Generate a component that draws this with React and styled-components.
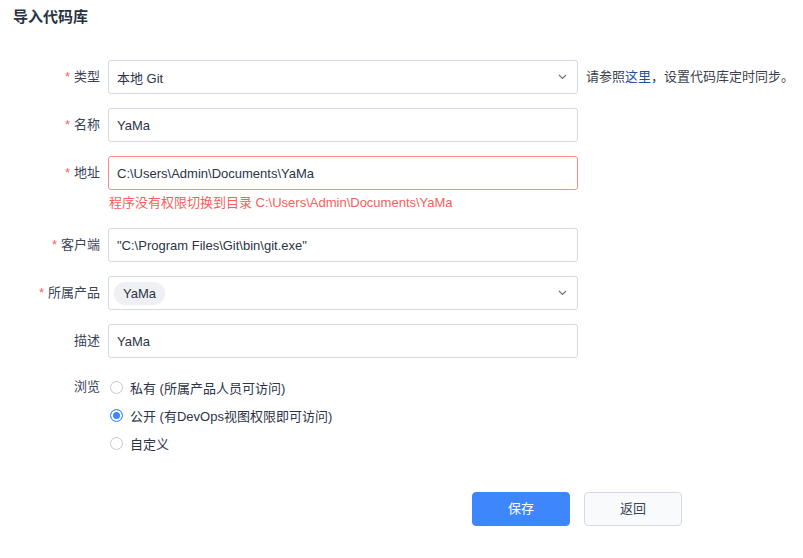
import React from "react";
import styled, { createGlobalStyle } from "styled-components";

const Global = createGlobalStyle`
  html, body { margin: 0; padding: 0; background: #fff; }
  body {
    font-family: "Liberation Sans", Arial, "Noto Sans CJK SC", sans-serif;
    font-size: 13px;
    color: #313c52;
  }
  * { box-sizing: border-box; }
`;

const Page = styled.div`
  width: 803px;
  height: 558px;
  padding: 0;
`;

const Title = styled.h2`
  margin: 0;
  height: 35px;
  padding-left: 13px;
  line-height: 34px;
  font-size: 15px;
  font-weight: bold;
  color: #2a3344;
`;

const Form = styled.form`
  margin-top: 25px;
  display: flex;
  flex-direction: column;
`;

const Row = styled.div`
  display: grid;
  grid-template-columns: 100px 470px auto;
  column-gap: 8px;
  align-items: start;
  margin-bottom: ${(p) => p.$gap ?? 14}px;
`;

const Label = styled.label`
  text-align: right;
  line-height: 34px;
  white-space: nowrap;
  color: #3a4358;
`;

const Star = styled.span`
  color: #ff5f5f;
  margin-right: 4px;
`;

const FieldBox = styled.div`
  display: flex;
  flex-direction: column;
`;

const Input = styled.div`
  height: 34px;
  display: flex;
  align-items: center;
  padding: 0 8px;
  border: 1px solid ${(p) => (p.$error ? "#fb8b8b" : "#d5d9e3")};
  border-radius: 3px;
  background: #fff;
  color: #2c3446;
  position: relative;
  white-space: nowrap;
`;

const Chevron = styled.svg`
  position: absolute;
  right: 10px;
  top: 13px;
`;

const Chip = styled.span`
  display: inline-flex;
  align-items: center;
  height: 23px;
  padding: 0 9px;
  margin-left: -3px;
  border-radius: 12px;
  background: #eef0f4;
`;

const Error = styled.div`
  margin-top: 2px;
  line-height: 22px;
  padding-left: 1px;
  color: #fb5c5c;
  white-space: nowrap;
`;

const Help = styled.div`
  line-height: 34px;
  white-space: nowrap;
  color: #3a3f4a;
`;

const HelpLink = styled.a`
  color: #1f4fa3;
  text-decoration: none;
`;

const RadioGroup = styled.div`
  display: flex;
  flex-direction: column;
  padding-top: 1px;
`;

const RadioLabel = styled.div`
  text-align: right;
  line-height: 28px;
  margin-top: 1px;
  color: #3a4358;
`;

const RadioItem = styled.div`
  display: flex;
  align-items: center;
  height: 28px;
  gap: 7px;
  padding-left: 2px;
  color: #2c3446;
`;

const RadioDot = styled.span`
  width: 13px;
  height: 13px;
  border-radius: 50%;
  border: 1px solid ${(p) => (p.$on ? "#3d86fb" : "#c3c8d3")};
  background: ${(p) => (p.$on ? "#3d86fb" : "#fff")};
  box-shadow: ${(p) => (p.$on ? "inset 0 0 0 2px #fff" : "none")};
  flex: none;
`;

const Actions = styled.div`
  display: flex;
  gap: 14px;
  padding-left: 472px;
  margin-top: 35px;
`;

const Button = styled.button`
  width: 98px;
  height: 34px;
  padding: 0 0 3px;
  border-radius: 4px;
  font-family: inherit;
  font-size: 13px;
  cursor: pointer;
  border: 1px solid ${(p) => (p.$primary ? "#3d86fb" : "#d5d9e3")};
  background: ${(p) => (p.$primary ? "#3d86fb" : "#f9fafc")};
  color: ${(p) => (p.$primary ? "#fff" : "#3a4358")};
`;

const ChevronDown = () => (
  <Chevron width="9" height="6" viewBox="0 0 9 6">
    <polyline points="1,1 4.5,4.5 8,1" fill="none" stroke="#6b7385" strokeWidth="1.2" />
  </Chevron>
);

export default function App() {
  return (
    <Page>
      <Global />
      <Title>导入代码库</Title>
      <Form onSubmit={(e) => e.preventDefault()}>
        <Row>
          <Label><Star>*</Star>类型</Label>
          <Input>本地 Git<ChevronDown /></Input>
          <Help>请参照<HelpLink href="#">这里</HelpLink>，设置代码库定时同步。</Help>
        </Row>
        <Row>
          <Label><Star>*</Star>名称</Label>
          <Input>YaMa</Input>
        </Row>
        <Row>
          <Label><Star>*</Star>地址</Label>
          <FieldBox>
            <Input $error>C:\Users\Admin\Documents\YaMa</Input>
            <Error>程序没有权限切换到目录 C:\Users\Admin\Documents\YaMa</Error>
          </FieldBox>
        </Row>
        <Row>
          <Label><Star>*</Star>客户端</Label>
          <Input>"C:\Program Files\Git\bin\git.exe"</Input>
        </Row>
        <Row>
          <Label><Star>*</Star>所属产品</Label>
          <Input><Chip>YaMa</Chip><ChevronDown /></Input>
        </Row>
        <Row>
          <Label>描述</Label>
          <Input>YaMa</Input>
        </Row>
        <Row $gap={0}>
          <RadioLabel>浏览</RadioLabel>
          <RadioGroup>
            <RadioItem><RadioDot />私有 (所属产品人员可访问)</RadioItem>
            <RadioItem><RadioDot $on />公开 (有DevOps视图权限即可访问)</RadioItem>
            <RadioItem><RadioDot />自定义</RadioItem>
          </RadioGroup>
        </Row>
        <Actions>
          <Button $primary type="submit">保存</Button>
          <Button type="button">返回</Button>
        </Actions>
      </Form>
    </Page>
  );
}
